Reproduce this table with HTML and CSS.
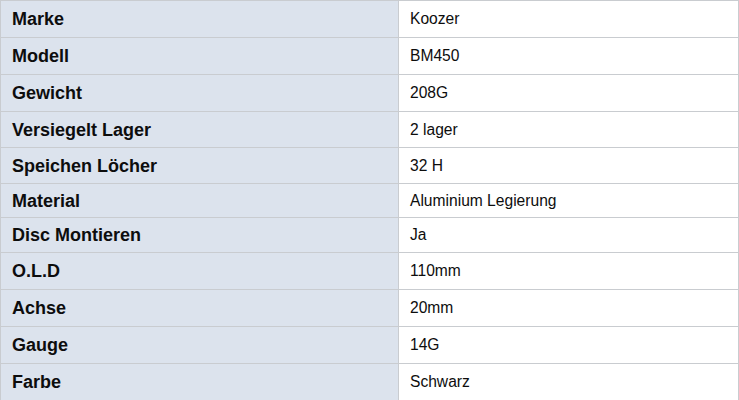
FILE: index.html
```html
<!DOCTYPE html>
<html lang="de">
<head>
<meta charset="utf-8">
<title>Spezifikation</title>
<link rel="stylesheet" href="styles.css">
</head>
<body>
<table class="specs">
  <tbody>
    <tr class="h37"><th>Marke</th><td>Koozer</td></tr>
    <tr class="h37"><th>Modell</th><td>BM450</td></tr>
    <tr class="h37"><th>Gewicht</th><td>208G</td></tr>
    <tr class="h36"><th>Versiegelt Lager</th><td>2 lager</td></tr>
    <tr class="h36"><th>Speichen Löcher</th><td>32 H</td></tr>
    <tr class="h34"><th>Material</th><td>Aluminium Legierung</td></tr>
    <tr class="h35"><th>Disc Montieren</th><td>Ja</td></tr>
    <tr class="h37"><th>O.L.D</th><td>110mm</td></tr>
    <tr class="h37"><th>Achse</th><td>20mm</td></tr>
    <tr class="h37"><th>Gauge</th><td>14G</td></tr>
    <tr class="h37"><th>Farbe</th><td>Schwarz</td></tr>
  </tbody>
</table>
</body>
</html>
```

FILE: styles.css
```css
html, body {
  margin: 0;
  padding: 0;
  background: #ffffff;
}

.specs {
  border-collapse: collapse;
  width: 739px;
  table-layout: fixed;
  font-family: "Liberation Sans", Arial, sans-serif;
  color: #0d0d0d;
}

.specs th,
.specs td {
  border: 1px solid #c9ccd0;
  padding: 0 12px 0 11px;
  vertical-align: middle;
  text-align: left;
  line-height: 20px;
}

.specs th {
  width: 374px;
  background: #dce3ed;
  font-weight: bold;
  font-size: 18px;
}

.specs td {
  background: #ffffff;
  font-size: 15.6px;
  font-weight: normal;
}

.h37 { height: 37px; }
.h36 { height: 36px; }
.h35 { height: 35px; }
.h34 { height: 34px; }
```
